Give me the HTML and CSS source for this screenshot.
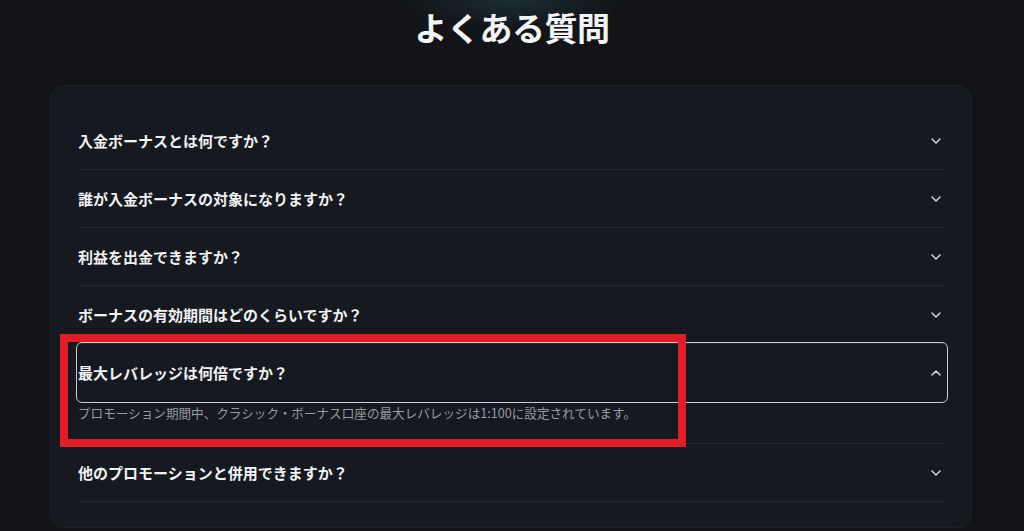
FILE: index.html
```html
<!DOCTYPE html>
<html lang="ja">
<head>
<meta charset="utf-8">
<title>よくある質問</title>
<link rel="stylesheet" href="styles.css">
</head>
<body>
<main class="page">
  <h1 class="title">よくある質問</h1>
  <section class="card">
    <div class="item">
      <div class="trigger"><span class="q">入金ボーナスとは何ですか？</span><svg class="chev" viewBox="0 0 10 6"><polyline points="1,1 5,5 9,1"/></svg></div>
    </div>
    <div class="item">
      <div class="trigger"><span class="q">誰が入金ボーナスの対象になりますか？</span><svg class="chev" viewBox="0 0 10 6"><polyline points="1,1 5,5 9,1"/></svg></div>
    </div>
    <div class="item">
      <div class="trigger"><span class="q">利益を出金できますか？</span><svg class="chev" viewBox="0 0 10 6"><polyline points="1,1 5,5 9,1"/></svg></div>
    </div>
    <div class="item">
      <div class="trigger"><span class="q">ボーナスの有効期間はどのくらいですか？</span><svg class="chev" viewBox="0 0 10 6"><polyline points="1,1 5,5 9,1"/></svg></div>
    </div>
    <div class="item open">
      <div class="trigger focused"><span class="q">最大レバレッジは何倍ですか？</span><svg class="chev" viewBox="0 0 10 6"><polyline points="1,5 5,1 9,5"/></svg></div>
      <p class="answer">プロモーション期間中、クラシック・ボーナス口座の最大レバレッジは1:100に設定されています。</p>
    </div>
    <div class="item">
      <div class="trigger"><span class="q">他のプロモーションと併用できますか？</span><svg class="chev" viewBox="0 0 10 6"><polyline points="1,1 5,5 9,1"/></svg></div>
    </div>
  </section>
</main>
<div class="highlight"></div>
</body>
</html>
```
FILE: styles.css
```css
html, body {
  margin: 0;
  padding: 0;
  height: 100%;
}
body {
  background: #121418;
  background-image: radial-gradient(ellipse 110px 30px at 512px 0, rgba(40, 95, 105, 0.35), rgba(18, 20, 24, 0));
  font-family: "Noto Sans CJK JP", "Noto Sans", sans-serif;
  color: #f1f2f4;
  overflow: hidden;
  position: relative;
}
.page {
  display: flex;
  flex-direction: column;
}
.title {
  margin: 0 0 31px;
  text-align: center;
  font-size: 33px;
  line-height: 54px;
  font-weight: 700;
  color: #f3f4f6;
  letter-spacing: -0.5px;
}
.card {
  margin: 0 52px 0 50px;
  padding: 26px 27px 25px;
  background: #161920;
  border: 1px solid #1c2028;
  border-radius: 14px;
}
.item {
  border-bottom: 1px solid #262a32;
}
.trigger {
  height: 57px;
  display: flex;
  align-items: center;
  justify-content: space-between;
}
.trigger.focused {
  outline: 1px solid #c9ccd2;
  outline-offset: 1px;
  border-radius: 4px;
  margin-right: -2px;
  padding-right: 2px;
}
.q {
  font-size: 15px;
  font-weight: 700;
  color: #f1f2f4;
}
.chev {
  width: 10px;
  height: 6px;
  margin-right: 3px;
  fill: none;
  stroke: #d6d9de;
  stroke-width: 1.5;
  stroke-linecap: round;
  stroke-linejoin: round;
}
.answer {
  margin: 0;
  padding: 2px 0 20px;
  font-size: 12.6px;
  line-height: 20px;
  color: #979ca4;
}
.highlight {
  position: absolute;
  left: 60px;
  top: 334px;
  width: 626px;
  height: 113px;
  box-sizing: border-box;
  border: 8px solid #e11d26;
  pointer-events: none;
}
```
